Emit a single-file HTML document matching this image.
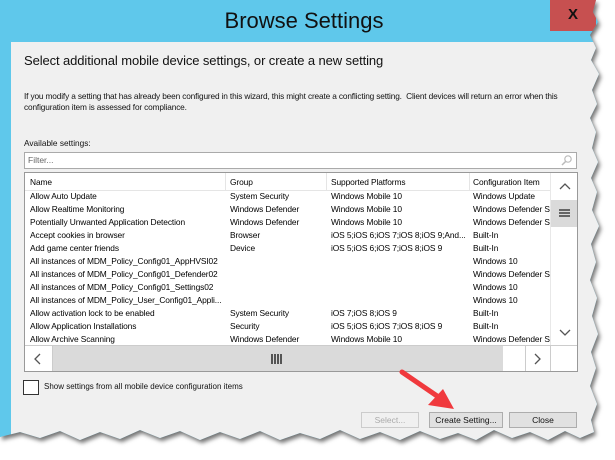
<!DOCTYPE html>
<html><head><meta charset="utf-8"><style>
*{margin:0;padding:0;box-sizing:border-box}
body{width:615px;height:460px;background:#fff;position:relative;overflow:hidden;font-family:"Liberation Sans",sans-serif;}
.wrap{position:absolute;left:0;top:0;width:615px;height:460px;filter:drop-shadow(2px 3px 2px rgba(0,0,0,.55));}
.win{position:absolute;left:0;top:0;width:615px;height:460px;background:#5fc8eb;
clip-path:polygon(0 0,596px 0,593px 12px,598px 22px,590px 35px,596px 48px,591px 60px,599px 74px,592px 90px,597px 104px,590px 118px,596px 132px,592px 148px,598px 162px,591px 178px,597px 192px,592px 210px,599px 226px,591px 244px,596px 262px,590px 280px,597px 298px,592px 316px,598px 334px,591px 352px,596px 368px,590px 386px,597px 404px,591px 420px,594px 432px,580px 438px,565px 431px,548px 440px,530px 432px,512px 438px,494px 430px,476px 440px,458px 433px,440px 439px,420px 431px,400px 440px,380px 432px,360px 439px,340px 430px,320px 439px,300px 433px,280px 440px,260px 431px,240px 439px,220px 432px,200px 440px,180px 431px,160px 438px,140px 430px,120px 439px,100px 432px,80px 440px,60px 431px,40px 438px,20px 432px,0 437px);}
.title{position:absolute;left:0;top:0;width:596px;height:42px;text-align:center;font-size:22px;line-height:42px;color:#111;padding-left:12px}
.close{position:absolute;left:550px;top:0;width:46px;height:31px;background:#c75050;color:#111;font-weight:bold;font-size:15px;text-align:center;line-height:30px}
.content{position:absolute;left:11px;top:42px;width:590px;height:410px;background:#f0f0f0}
.t{position:absolute;white-space:nowrap;color:#111}
.h{left:24px;top:53px;font-size:13px;letter-spacing:-.1px}
.info{left:24px;top:91px;font-size:8.3px;line-height:11px;letter-spacing:-.15px}
.filter{position:absolute;left:24px;top:152px;width:553px;height:17px;background:#fff;border:1px solid #aaa;font-size:8.5px;color:#666;padding:2px 3px}
.list{position:absolute;left:24px;top:172px;width:554px;height:200px;background:#fff;border:1px solid #999;overflow:hidden;font-size:8.4px;letter-spacing:-.1px}
.hdr{position:absolute;left:0;top:0;width:526px;height:18px;border-bottom:1px solid #e5e5e5}
.hdr span,.row span{position:absolute;white-space:nowrap}
.hdr i{position:absolute;top:0;height:18px;border-left:1px solid #e5e5e5}
.row{position:absolute;left:0;width:526px;height:13px;overflow:hidden}
.vs{position:absolute;left:525px;top:0;width:28px;height:173px;background:#fff;border-left:1px solid #e8e8e8}
.hs{position:absolute;left:0;top:172px;width:553px;height:27px;background:#fff;border-top:1px solid #ccc}
.btn{position:absolute;top:412px;height:16px;border:1px solid #adadad;background:#e1e1e1;font-size:8.5px;text-align:center;line-height:14px;color:#111}
</style></head><body>
<div class="wrap"><div class="win">
<div class="title">Browse Settings</div>
<div class="close">X</div>
<div class="content"></div>
<div class="t h">Select additional mobile device settings, or create a new setting</div>
<div class="t info">If you modify a setting that has already been configured in this wizard, this might create a conflicting setting.&nbsp; Client devices will return an error when this<br>configuration item is assessed for compliance.</div>
<div class="t" style="left:24px;top:138px;font-size:8.3px">Available settings:</div>
<div class="filter">Filter...<svg style="position:absolute;right:4px;top:2px" width="11" height="11"><circle cx="7" cy="4" r="3.2" fill="none" stroke="#bbb" stroke-width="1.2"/><line x1="4.8" y1="6.3" x2="1" y2="10" stroke="#bbb" stroke-width="1.5"/></svg></div>
<div class="list">
<div class="hdr"><span style="left:5px;top:4px">Name</span><i style="left:200px"></i><span style="left:205px;top:4px">Group</span><i style="left:301px"></i><span style="left:306px;top:4px">Supported Platforms</span><i style="left:444px"></i><span style="left:448px;top:4px">Configuration Item</span></div>
<div class="row" style="top:18px"><span style="left:5px">Allow Auto Update</span><span style="left:205px">System Security</span><span style="left:306px">Windows Mobile 10</span><span style="left:448px">Windows Update</span></div>
<div class="row" style="top:31px"><span style="left:5px">Allow Realtime Monitoring</span><span style="left:205px">Windows Defender</span><span style="left:306px">Windows Mobile 10</span><span style="left:448px">Windows Defender S</span></div>
<div class="row" style="top:44px"><span style="left:5px">Potentially Unwanted Application Detection</span><span style="left:205px">Windows Defender</span><span style="left:306px">Windows Mobile 10</span><span style="left:448px">Windows Defender S</span></div>
<div class="row" style="top:57px"><span style="left:5px">Accept cookies in browser</span><span style="left:205px">Browser</span><span style="left:306px">iOS 5;iOS 6;iOS 7;iOS 8;iOS 9;And...</span><span style="left:448px">Built-In</span></div>
<div class="row" style="top:70px"><span style="left:5px">Add game center friends</span><span style="left:205px">Device</span><span style="left:306px">iOS 5;iOS 6;iOS 7;iOS 8;iOS 9</span><span style="left:448px">Built-In</span></div>
<div class="row" style="top:83px"><span style="left:5px">All instances of MDM_Policy_Config01_AppHVSI02</span><span style="left:448px">Windows 10</span></div>
<div class="row" style="top:96px"><span style="left:5px">All instances of MDM_Policy_Config01_Defender02</span><span style="left:448px">Windows Defender S</span></div>
<div class="row" style="top:109px"><span style="left:5px">All instances of MDM_Policy_Config01_Settings02</span><span style="left:448px">Windows 10</span></div>
<div class="row" style="top:122px"><span style="left:5px">All instances of MDM_Policy_User_Config01_Appli...</span><span style="left:448px">Windows 10</span></div>
<div class="row" style="top:135px"><span style="left:5px">Allow activation lock to be enabled</span><span style="left:205px">System Security</span><span style="left:306px">iOS 7;iOS 8;iOS 9</span><span style="left:448px">Built-In</span></div>
<div class="row" style="top:148px"><span style="left:5px">Allow Application Installations</span><span style="left:205px">Security</span><span style="left:306px">iOS 5;iOS 6;iOS 7;iOS 8;iOS 9</span><span style="left:448px">Built-In</span></div>
<div class="row" style="top:161px"><span style="left:5px">Allow Archive Scanning</span><span style="left:205px">Windows Defender</span><span style="left:306px">Windows Mobile 10</span><span style="left:448px">Windows Defender S</span></div>
<div class="vs">
<svg style="position:absolute;left:8px;top:10px" width="12" height="8"><polyline points="1,6 6,1 11,6" fill="none" stroke="#555" stroke-width="1.3"/></svg>
<div style="position:absolute;left:0;top:27px;width:27px;height:27px;background:#dadada"></div>
<div style="position:absolute;left:8px;top:36px;width:11px;height:2px;background:#666;box-shadow:0 3px 0 #666,0 6px 0 #666"></div>
<svg style="position:absolute;left:8px;top:156px" width="12" height="8"><polyline points="1,1 6,6 11,1" fill="none" stroke="#555" stroke-width="1.3"/></svg>
</div>
<div class="hs">
<svg style="position:absolute;left:9px;top:7px" width="8" height="12"><polyline points="6,1 1,6 6,11" fill="none" stroke="#555" stroke-width="1.3"/></svg>
<div style="position:absolute;left:27px;top:0;width:451px;height:26px;background:#dadada;border-left:1px solid #ccc"></div>
<div style="position:absolute;left:246px;top:8px;width:2px;height:10px;background:#555;box-shadow:3px 0 0 #555,6px 0 0 #555,9px 0 0 #555"></div>
<div style="position:absolute;left:500px;top:0;width:1px;height:26px;background:#ccc"></div>
<svg style="position:absolute;left:509px;top:7px" width="8" height="12"><polyline points="1,1 6,6 1,11" fill="none" stroke="#555" stroke-width="1.3"/></svg>
<div style="position:absolute;left:525px;top:0;width:1px;height:26px;background:#ccc"></div>
</div>
</div>
<div style="position:absolute;left:23px;top:380px;width:16px;height:15px;background:#fff;border:1px solid #333"></div>
<div class="t" style="left:44px;top:382px;font-size:8px">Show settings from all mobile device configuration items</div>
<div class="btn" style="left:361px;width:58px;color:#aaa;background:#f0f0f0;border-color:#ccc">Select...</div>
<div class="btn" style="left:429px;width:74px">Create Setting...</div>
<div class="btn" style="left:509px;width:68px">Close</div>
</div></div>
<svg style="position:absolute;left:0;top:0" width="615" height="460"><line x1="402" y1="372" x2="440" y2="398" stroke="#f0393d" stroke-width="5" stroke-linecap="round"/><polygon points="454,409 428,405 443,389" fill="#f0393d"/></svg>
</body></html>
